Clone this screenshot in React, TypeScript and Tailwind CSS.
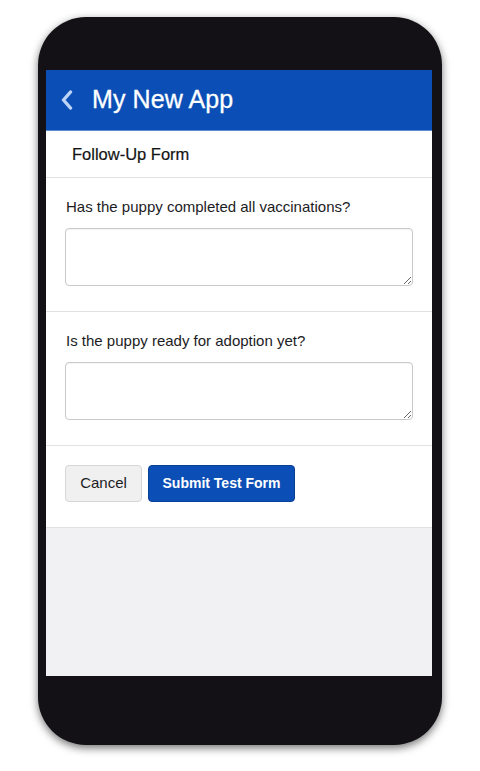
const Question = ({ label }: { label: string }) => (
  <div className="bg-white px-[19px] pt-[19px] pb-[25px] border-b border-[#e2e1e5]">
    <p className="text-[15px] leading-5 text-[#1c1c1e] pl-px">{label}</p>
    <textarea className="mt-[11px] block w-full h-[58px] rounded-[4px] border border-[#c9c9cc] bg-white shadow-[inset_0_1px_1px_rgba(0,0,0,0.04)] outline-none resize-y" />
  </div>
);

const BackChevron = () => (
  <svg width="12" height="20" viewBox="0 0 12 20" className="shrink-0">
    <path d="M9.5 2 L2.5 10 L9.5 18" fill="none" stroke="#bcd5f7" strokeWidth="3.4" strokeLinecap="round" strokeLinejoin="round" />
  </svg>
);

const App = () => {
  return (
    <div className="min-h-screen bg-white flex justify-center pt-[17px] font-['Liberation_Sans',Arial,sans-serif]">
      <div className="w-[404px] h-[728px] rounded-[48px] bg-[#131115] shadow-[0_3px_8px_rgba(0,0,0,0.55)] pt-[53px] pl-[8px]">
        <div className="w-[386px] h-[606px] bg-[#f1f0f2] flex flex-col">
          <div className="h-[61px] bg-[#0b4fb6] flex items-center pl-[15px] gap-[19px] border-b border-[#5b8fd6]">
            <BackChevron />
            <h1 className="text-[25px] text-white tracking-[0.1px] [-webkit-text-stroke:0.3px_white]">My New App</h1>
          </div>
          <div className="h-[47px] bg-white flex items-center pl-[26px] border-b border-[#e2e1e5]">
            <h2 className="text-[16.5px] text-[#141414] [-webkit-text-stroke:0.2px_#141414]">Follow-Up Form</h2>
          </div>
          <Question label="Has the puppy completed all vaccinations?" />
          <Question label="Is the puppy ready for adoption yet?" />
          <div className="bg-white px-[19px] pt-[19px] pb-[25px] border-b border-[#e2e1e5] flex gap-[6px]">
            <button className="h-[37px] w-[77px] rounded-[4px] border border-[#d6d6d9] bg-[#f0f0f1] text-[15px] text-[#1c1c1e]">
              Cancel
            </button>
            <button className="h-[37px] w-[147px] rounded-[4px] border border-[#0a3f93] bg-[#0b4fb6] text-[14px] font-bold text-white">
              Submit Test Form
            </button>
          </div>
        </div>
      </div>
    </div>
  );
};

export default App;
